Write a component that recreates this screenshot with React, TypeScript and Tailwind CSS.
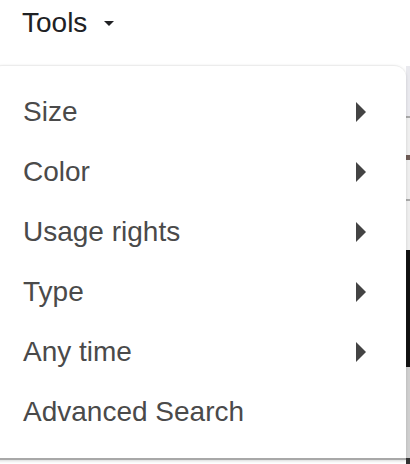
const items = [
  { label: "Size", arrow: true },
  { label: "Color", arrow: true },
  { label: "Usage rights", arrow: true },
  { label: "Type", arrow: true },
  { label: "Any time", arrow: true },
  { label: "Advanced Search", arrow: false },
];

export default function App() {
  return (
    <div className="relative w-[410px] h-[464px] overflow-hidden bg-white font-['Liberation_Sans',Arial,sans-serif]">
      <div className="flex items-center h-[44px] pl-[22px] pt-[2px] gap-[17px]">
        <span className="text-[28px] text-[#202124]">Tools</span>
        <svg width="10" height="5" viewBox="0 0 10 5" className="mt-[1px]">
          <path d="M0 0h10L5 5z" fill="#202124" />
        </svg>
      </div>

      {/* background results peeking at the right edge */}
      <div className="absolute right-0 top-[62px] w-[4px] h-[402px] flex flex-col">
        <div className="h-[4px] bg-white" />
        <div className="h-[50px] bg-[#e9e9ee]" />
        <div className="h-[2px] bg-[#a9a9a9]" />
        <div className="h-[37px] bg-[#efefef]" />
        <div className="h-[5px] bg-[#6d5b55]" />
        <div className="h-[39px] bg-[#eeeeee]" />
        <div className="h-[2px] bg-[#a9a9a9]" />
        <div className="h-[49px] bg-[#eeeeee]" />
        <div className="h-[117px] bg-[#111111]" />
        <div className="h-[91px] bg-[#cfcfcf]" />
        <div className="flex-1 bg-[#333333]" />
      </div>

      {/* dropdown menu */}
      <div className="absolute left-[-10px] top-[65px] w-[416px] h-[395px] bg-white rounded-t-[12px] border-t border-[#ececec] border-b-2 border-b-[#a8a8a8] shadow-[0_1px_3px_rgba(60,64,67,0.2)] pt-[16px]">
        {items.map((it) => (
          <div key={it.label} className="flex items-center justify-between h-[60px] pl-[33px] pr-[40px]">
            <span className="text-[28px] leading-[60px] text-[#4a4a4a]">{it.label}</span>
            {it.arrow ? (
              <svg width="10" height="20" viewBox="0 0 10 20">
                <path d="M0 0L10 10L0 20z" fill="#444444" />
              </svg>
            ) : null}
          </div>
        ))}
      </div>
    </div>
  );
}
